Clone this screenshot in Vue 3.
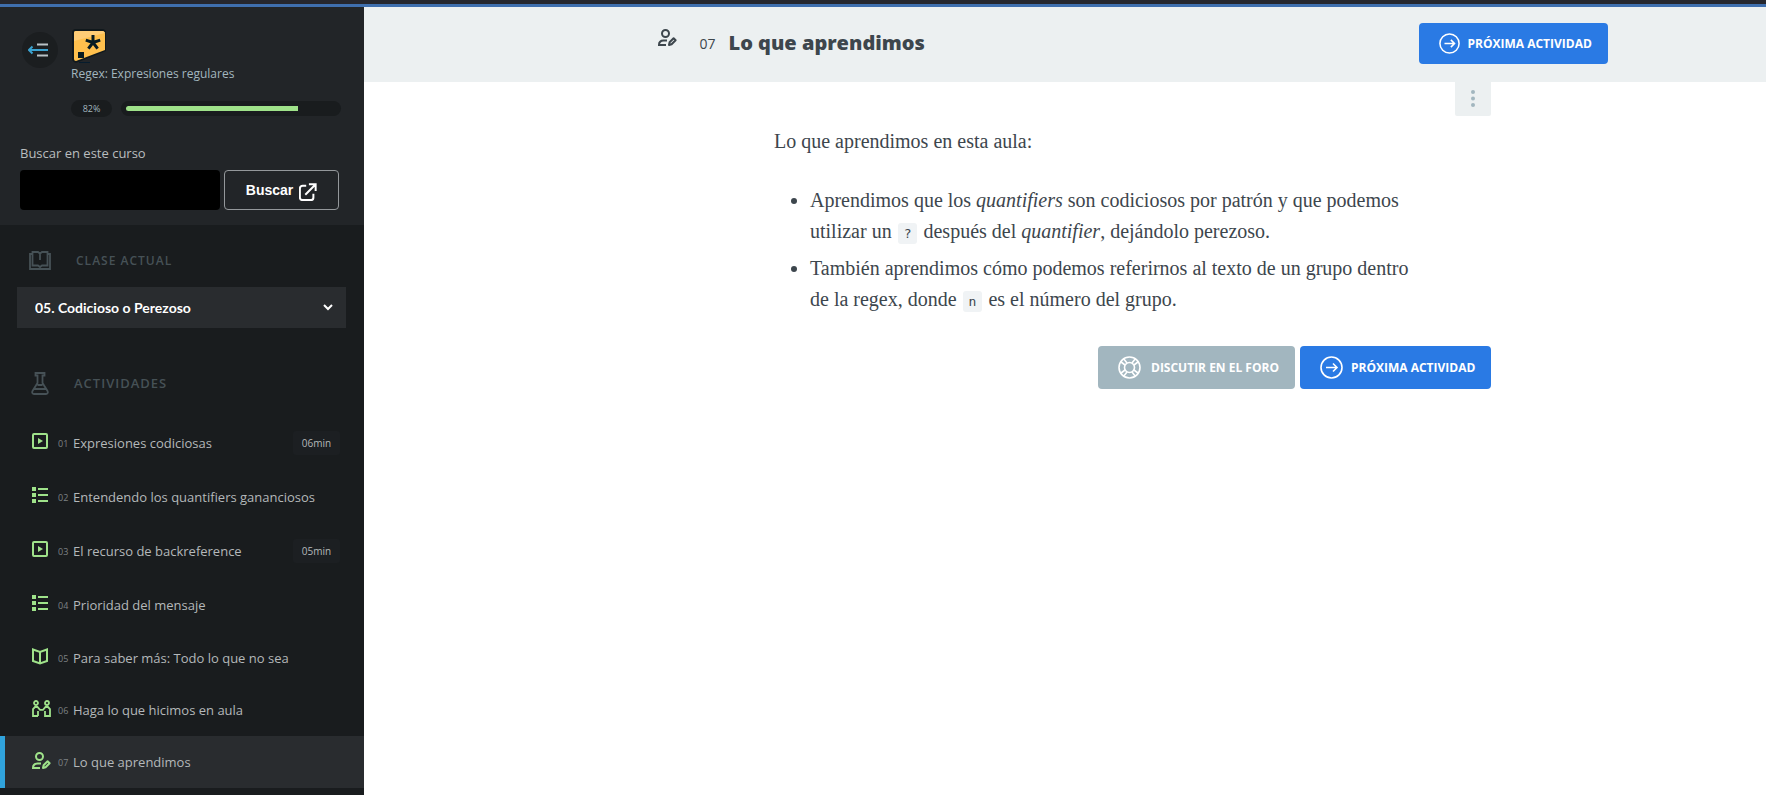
<script setup>
import { ref } from 'vue'

const query = ref('')
const lesson = ref('05')
const progress = 82
const activities = [
  { num: '01', title: 'Expresiones codiciosas', icon: 'video', time: '06min' },
  { num: '02', title: 'Entendendo los quantifiers gananciosos', icon: 'list' },
  { num: '03', title: 'El recurso de backreference', icon: 'video', time: '05min' },
  { num: '04', title: 'Prioridad del mensaje', icon: 'list' },
  { num: '05', title: 'Para saber más: Todo lo que no sea', icon: 'book', compact: true },
  { num: '06', title: 'Haga lo que hicimos en aula', icon: 'people', compact: true },
  { num: '07', title: 'Lo que aprendimos', icon: 'user', compact: true, active: true }
]
</script>

<template>
  <div class="page">
    <div class="topbar"></div>
    <div class="layout">
      <aside class="sidebar">
        <div class="course">
          <div class="course-head">
            <button class="collapse" type="button" aria-label="Cerrar menú">
              <svg width="20" height="14" viewBox="0 0 20 14" fill="none">
                <path d="M9 1.500h11M9 12.500h11" stroke="#b9c2c6" stroke-width="2" />
                <path d="M1 7h19M4.500 3.500L1 7l3.500 3.500" stroke="#3ba3d0" stroke-width="2" />
              </svg>
            </button>
            <div class="course-info">
              <svg class="logo" width="36" height="34" viewBox="0 0 36 34">
                <path d="M4 0h27a4 4 0 0 1 4 4v18L6 33.500a4 4 0 0 1-5-4V4a4 4 0 0 1 3-4z" fill="#10181c" />
                <path d="M5 2h26a3 3 0 0 1 3 3v16L5 32a2 2 0 0 1-2-2V4a2 2 0 0 1 2-2z" fill="#ffc04d" />
                <path d="M5 2h26a3 3 0 0 1 3 2L3 12V4a2 2 0 0 1 2-2z" fill="#ffcd76" />
                <path d="M22 13.500V6M22 13.500l7.200-2.400M22 13.500l4.600 6.200M22 13.500l-4.600 6.200M22 13.500l-7.200-2.400" stroke="#081c22" stroke-width="3" />
                <rect x="7" y="23" width="6" height="6" fill="#081c22" />
                <path d="M8 33.500h11" stroke="#061c2d" />
              </svg>
              <a class="course-name" href="#">Regex: Expresiones regulares</a>
              <div class="progress-row">
                <span class="percent">{{ progress }}%</span>
                <div class="track" role="progressbar" :aria-valuenow="progress">
                  <div class="fill" :style="{ width: progress + '%' }"></div>
                </div>
              </div>
            </div>
          </div>
          <form class="search" @submit.prevent>
            <label for="search-box">Buscar en este curso</label>
            <div class="search-row">
              <input id="search-box" v-model="query" type="text" />
              <button type="submit">
                Buscar
                <svg width="18" height="18" viewBox="0 0 20 20" fill="none" stroke="#fff" stroke-width="2.200">
                  <path d="M8 3H4a3 3 0 0 0-3 3v10a3 3 0 0 0 3 3h9a3 3 0 0 0 3-3v-4M11 1.500h7.500V9M18 2L7 13" />
                </svg>
              </button>
            </div>
          </form>
        </div>

        <div class="section-title">
          <span class="section-icon">
            <svg width="22" height="19" viewBox="0 0 22 19" fill="none" stroke="#465156" stroke-width="1.800">
              <path d="M3.500 3H1v15h20V3h-2.500" />
              <path d="M3.500 1H9l2 1.500L13 1h5.500v13.500H13l-2 1.500-2-1.500H3.500zM11 2.500V9" />
            </svg>
          </span>
          <label for="lesson">CLASE ACTUAL</label>
        </div>
        <div class="select-wrap">
          <select id="lesson" v-model="lesson">
            <option value="05">05. Codicioso o Perezoso</option>
          </select>
          <svg class="chevron" width="10" height="7" viewBox="0 0 10 7" fill="none" stroke="#fff" stroke-width="2">
            <path d="M1 1l4 4 4-4" />
          </svg>
        </div>

        <div class="section-title activities-title">
          <span class="section-icon">
            <svg width="18" height="23" viewBox="0 0 18 23" fill="none" stroke="#465156" stroke-width="1.800">
              <path d="M4.500 1h9v2.500h-2V11l5 8c.8 1.800 0 3-1.500 3H3c-1.500 0-2.300-1.200-1.500-3l5-8V3.500h-2zM6.500 13h5M3.500 17h11" />
            </svg>
          </span>
          <h2>ACTIVIDADES</h2>
        </div>
        <nav class="activities">
          <a
            v-for="item in activities"
            :key="item.num"
            href="#"
            class="activity"
            :class="{ compact: item.compact, active: item.active }"
          >
            <svg v-if="item.icon === 'video'" class="icon" viewBox="0 0 19 18" fill="none" stroke="#9fe28a" stroke-width="2">
              <rect x="1" y="1" width="14" height="14" rx="1" />
              <path d="M6 5l5 3-5 3z" fill="#9fe28a" stroke="none" />
            </svg>
            <svg v-else-if="item.icon === 'list'" class="icon" viewBox="0 0 19 18" fill="#9fe28a">
              <path d="M0 0h4v4H0zM0 6h4v4H0zM0 12h4v4H0zM6 1h10v2H6zM6 7h10v2H6zM6 13h10v2H6z" />
            </svg>
            <svg v-else-if="item.icon === 'book'" class="icon" viewBox="0 0 19 18" fill="none" stroke="#9fe28a" stroke-width="2">
              <path d="M1 1.500L8 4l7-2.500V13l-7 2.500L1 13zM8 4v11" />
            </svg>
            <svg v-else-if="item.icon === 'people'" class="icon" viewBox="0 0 19 18" fill="none" stroke="#9fe28a" stroke-width="1.800">
              <circle cx="4" cy="3" r="2" />
              <circle cx="15" cy="3" r="2" />
              <path d="M6 16H1V9l2-2h2.500L8 9.800h3L13.500 7H16l2 2v7h-5v-5M6 16v-5" />
            </svg>
            <svg v-else class="icon" viewBox="0 0 19 18" fill="none" stroke="#9fe28a" stroke-width="2">
              <circle cx="7.500" cy="4.500" r="3.500" />
              <path d="M9 11.500H5.500C2.500 11.500 1 13.500 1 16h7" />
              <path d="M11 16l.6-2.800 4-4 2 2-4 4z" stroke-linejoin="round" />
            </svg>
            <span class="num">{{ item.num }}</span>
            <span class="name">{{ item.title }}</span>
            <span v-if="item.time" class="time">{{ item.time }}</span>
          </a>
        </nav>
      </aside>

      <main class="main">
        <header class="header">
          <div class="header-inner">
            <svg class="header-icon" width="19" height="18" viewBox="0 0 19 18" fill="none" stroke="#3d464d" stroke-width="2">
              <circle cx="7.500" cy="4.500" r="3.500" />
              <path d="M9 11.500H5.500C2.500 11.500 1 13.500 1 16h7" />
              <path d="M11 16l.6-2.800 4-4 2 2-4 4z" stroke-linejoin="round" />
            </svg>
            <span class="header-num">07</span>
            <h1>Lo que aprendimos</h1>
            <a class="button next" href="#">
              <svg width="21" height="21" viewBox="0 0 23 23" fill="none" stroke="#fff" stroke-width="1.700">
                <circle cx="11.500" cy="11.500" r="10.500" />
                <path d="M6 11.500h11M13 7.500l4 4-4 4" />
              </svg>
              PRÓXIMA ACTIVIDAD
            </a>
          </div>
        </header>
        <div class="content">
          <button class="more" type="button" aria-label="Más opciones">
            <svg width="4" height="17" viewBox="0 0 4 17" fill="#a2b6bf">
              <circle cx="2" cy="2" r="2" />
              <circle cx="2" cy="8.500" r="2" />
              <circle cx="2" cy="15" r="2" />
            </svg>
          </button>
          <article>
            <p>Lo que aprendimos en esta aula:</p>
            <ul>
              <li>Aprendimos que los <em>quantifiers</em> son codiciosos por patrón y que podemos utilizar un <code>?</code> después del <em>quantifier</em>, dejándolo perezoso.</li>
              <li>También aprendimos cómo podemos referirnos al texto de un grupo dentro de la regex, donde <code>n</code> es el número del grupo.</li>
            </ul>
          </article>
          <div class="actions">
            <a class="button forum" href="#">
              <svg width="23" height="23" viewBox="0 0 23 23" fill="none" stroke="#fff" stroke-width="1.600">
                <circle cx="11.500" cy="11.500" r="10.500" />
                <circle cx="11.500" cy="11.500" r="5" />
                <path d="M7 9L2.500 5.500M9 7L5.500 2.500M14 7l3.500-4.500M16 9l4.500-3.500M7 14l-4.500 3.500M9 16l-3.500 4.500M14 16l3.500 4.500M16 14l4.500 3.500" />
              </svg>
              DISCUTIR EN EL FORO
            </a>
            <a class="button next" href="#">
              <svg width="23" height="23" viewBox="0 0 23 23" fill="none" stroke="#fff" stroke-width="1.600">
                <circle cx="11.500" cy="11.500" r="10.500" />
                <path d="M6 11.500h11M13 7.500l4 4-4 4" />
              </svg>
              PRÓXIMA ACTIVIDAD
            </a>
          </div>
        </div>
      </main>
    </div>
  </div>
</template>

<style>
body {
  margin: 0;
  background: #fff;
}
</style>

<style scoped>
* {
  box-sizing: border-box;
}
.page {
  display: flex;
  flex-direction: column;
  min-height: 100vh;
  font-family: "Open Sans", sans-serif;
}
a {
  text-decoration: none;
}
button,
input,
select {
  font-family: inherit;
}
.topbar {
  height: 7px;
  background: #26272e;
  border-bottom: 3px solid #3f6fae;
}
.layout {
  display: flex;
  flex: 1;
}
.sidebar {
  flex: 0 0 364px;
  background: #191c1e;
}
.course {
  padding: 22px 23px 15px 20px;
  background: #222528;
}
.course-head {
  display: flex;
  gap: 13px;
}
.collapse {
  display: flex;
  align-items: center;
  justify-content: center;
  flex: none;
  width: 36px;
  height: 36px;
  margin: 3px 0 0 2px;
  padding: 0 4px 0 0;
  border: 0;
  border-radius: 50%;
  background: #1b1e20;
}
.course-info {
  display: flex;
  flex: 1;
  flex-direction: column;
}
.course-name {
  font-size: 12px;
  line-height: 22px;
  color: #a2b6bf;
}
.progress-row {
  display: flex;
  align-items: center;
  gap: 9px;
  margin-top: 15px;
}
.percent {
  width: 41px;
  border-radius: 9px;
  background: #191c1e;
  color: #a2b6bf;
  font-size: 9px;
  line-height: 17px;
  text-align: center;
}
.track {
  flex: 1;
  height: 15px;
  padding: 5px;
  border-radius: 8px;
  background: #191c1e;
}
.fill {
  height: 5px;
  border-radius: 3px 0 0 3px;
  background: #9fe28a;
}
.search {
  margin: 26px 2px 0 0;
}
.search label {
  display: block;
  font-size: 13px;
  line-height: 20px;
  color: #b9bdbf;
}
.search-row {
  display: flex;
  gap: 4px;
  margin-top: 7px;
}
.search input {
  flex: 1;
  min-width: 0;
  height: 40px;
  padding: 0 12px;
  border: 0;
  border-radius: 4px;
  background: #000;
  color: #fff;
}
.search button {
  display: flex;
  align-items: center;
  justify-content: center;
  gap: 6px;
  width: 115px;
  height: 40px;
  padding: 0;
  border: 1px solid #94989b;
  border-radius: 4px;
  background: transparent;
  color: #fff;
  font-family: "Liberation Sans", Arial, sans-serif;
  font-size: 14px;
  font-weight: 700;
}
.search button svg {
  margin-top: 4px;
}
.section-title {
  display: flex;
  align-items: center;
  gap: 25px;
  height: 62px;
  padding: 9px 30px 0 29px;
  color: #465156;
}
.section-icon {
  display: flex;
  justify-content: center;
  width: 22px;
}
.section-title h2,
.section-title label {
  margin: 0;
  font-size: 12px;
  font-weight: 600;
  letter-spacing: 1px;
}
.section-title h2 {
  font-size: 13px;
}
.activities-title {
  gap: 23px;
  height: 88px;
  padding-top: 22px;
}
.select-wrap {
  position: relative;
  margin: 0 18px 0 17px;
}
.select-wrap select {
  display: block;
  width: 100%;
  height: 41px;
  padding: 0 18px;
  border: 0;
  border-radius: 0;
  appearance: none;
  background: #292c2f;
  color: #fff;
  font-family: Lato, sans-serif;
  font-size: 14px;
  font-weight: 700;
}
.chevron {
  position: absolute;
  top: 17px;
  right: 13px;
  pointer-events: none;
}
.activity {
  display: flex;
  align-items: center;
  height: 54px;
  padding: 0 24px 0 27px;
  border-left: 5px solid transparent;
  color: #b4b8ba;
}
.activity.compact {
  height: 52px;
}
.activity.active {
  border-color: #30a3dc;
  background: #292c2f;
}
.icon {
  flex: none;
  width: 19px;
  height: 18px;
  margin: 0 7px 2px 0;
}
.num {
  width: 15px;
  font-size: 9px;
  color: #7d8285;
}
.name {
  flex: 1;
  font-size: 13px;
  white-space: nowrap;
}
.time {
  width: 47px;
  border-radius: 3px;
  background: #1c1f22;
  font-size: 10px;
  line-height: 24px;
  text-align: center;
}
.main {
  flex: 1;
  min-width: 0;
}
.header {
  display: flex;
  padding: 16px 0 18px 135px;
  background: #ecf0f1;
}
.header-inner {
  display: flex;
  align-items: center;
  width: 100%;
  max-width: 950px;
  margin: 0 auto;
}
.header-icon {
  margin-bottom: 12px;
}
.header-num {
  margin: 0 13px 0 23px;
  color: #3d464d;
  font-size: 14px;
}
h1 {
  flex: 1;
  margin: 0;
  color: #3d464d;
  font-size: 20px;
  font-weight: 800;
  line-height: 30px;
  padding-bottom: 2px;
}
.button {
  display: flex;
  align-items: center;
  padding-left: 20px;
  border-radius: 4px;
  color: #fff;
  font-size: 12px;
  font-weight: 700;
  white-space: nowrap;
}
.next {
  gap: 8px;
  width: 191px;
  height: 43px;
  background: #2a7ae4;
}
.header .next {
  width: 189px;
  height: 41px;
}
.forum {
  gap: 10px;
  width: 197px;
  height: 43px;
  background: #a2b6bf;
}
.content {
  padding-left: 135px;
}
.content > * {
  max-width: 717px;
  margin: 0 auto;
}
.more {
  display: flex;
  align-items: center;
  justify-content: center;
  width: 36px;
  height: 34px;
  padding: 0 0 1px;
  border: 0;
  border-radius: 0 0 2px 2px;
  background: #ecf0f1;
}
.content > .more {
  margin-right: max(0px, calc((100% - 717px) / 2));
}
article {
  padding-right: 60px;
  color: #3d464d;
  font-family: "Liberation Serif", serif;
  font-size: 20px;
  line-height: 31px;
}
article p {
  margin: 0;
  padding-top: 10px;
}
ul {
  margin: 28px 0 0;
  padding-left: 36px;
}
li + li {
  margin-top: 6px;
}
code {
  display: inline-block;
  margin: 0 1px;
  padding: 0 6px;
  border-radius: 3px;
  background: #f0f3f5;
  font-family: "DejaVu Sans Mono", monospace;
  font-size: 13px;
  line-height: 21px;
}
.actions {
  display: flex;
  justify-content: flex-end;
  gap: 5px;
  padding-top: 31px;
}
</style>
